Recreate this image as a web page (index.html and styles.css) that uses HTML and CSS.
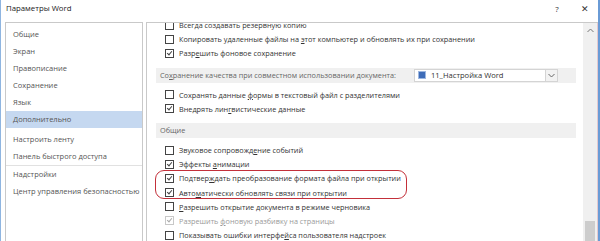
FILE: index.html
```html
<!DOCTYPE html>
<html lang="ru">
<head>
  <meta charset="UTF-8" />
  <title>Параметры Word</title>
  <link rel="stylesheet" href="styles.css">
</head>
<body>
  <div class="window">
    <div class="titlebar">
      <span class="title">Параметры Word</span>
      <span class="help">?</span>
      <span class="close">✕</span>
    </div>

    <div class="main">
      <ul class="nav">
        <li>Общие</li>
        <li>Экран</li>
        <li>Правописание</li>
        <li>Сохранение</li>
        <li>Язык</li>
        <li class="active">Дополнительно</li>
        <li class="gap">Настроить ленту</li>
        <li>Панель быстрого доступа</li>
        <li class="sep"></li>
        <li>Надстройки</li>
        <li>Центр управления безопасностью</li>
      </ul>

      <div class="content">
        <div class="scroller">
          <div class="list">
            <div class="row"><span class="box"></span><span>Всегда создавать резервную копию</span></div>
            <div class="row"><span class="box"></span><span>Копировать удаленные файлы на <u>э</u>тот компьютер и обновлять их при сохранении</span></div>
            <div class="row"><span class="box on"></span><span>Разр<u>е</u>шить фоновое сохранение</span></div>

            <div class="head">
              <span>Со<u>х</u>ранение качества при совместном использовании документа:</span>
              <span class="combo">
                <span class="doc-icon"></span>
                <span class="combo-text">11_Настройка Word</span>
                <span class="combo-btn">
                  <svg width="7" height="5" viewBox="0 0 7 5"><path d="M0.5 1 L3.5 4 L6.5 1" fill="none" stroke="#666" stroke-width="1"/></svg>
                </span>
              </span>
            </div>

            <div class="row"><span class="box"></span><span>Сохранять данные <u>ф</u>ормы в текстовый файл с разделителями</span></div>
            <div class="row"><span class="box on"></span><span>Внедрять лин<u>г</u>вистические данные</span></div>

            <div class="head"><span>Общие</span></div>

            <div class="row"><span class="box"></span><span>Звуковое сопровожд<u>е</u>ние событий</span></div>
            <div class="row"><span class="box on"></span><span>Эффекты <u>а</u>нимации</span></div>
            <div class="row"><span class="box on"></span><span>Подтвер<u>ж</u>дать преобразование формата файла при открытии</span></div>
            <div class="row"><span class="box on"></span><span>Авто<u>м</u>атически обновлять связи при открытии</span></div>
            <div class="row"><span class="box"></span><span><u>Р</u>азрешить открытие документа в режиме черновика</span></div>
            <div class="row disabled"><span class="box on"></span><span>Разрешить <u>ф</u>оновую разбивку на страницы</span></div>
            <div class="row"><span class="box"></span><span>Показывать ошибки интерфе<u>й</u>са пользователя надстроек</span></div>
          </div>
          <div class="mark"></div>
        </div>

        <div class="scrollbar">
          <svg class="arrow" width="7" height="5" viewBox="0 0 7 5"><path d="M0.5 4 L3.5 1 L6.5 4" fill="none" stroke="#777" stroke-width="1"/></svg>
          <div class="thumb"></div>
        </div>
      </div>
    </div>
  </div>
</body>
</html>
```

FILE: styles.css
```css
body {
  margin: 0;
  font-family: "Open Sans", "Noto Sans", sans-serif;
  font-size: 7.3px;
  color: #333;
  background: #fff;
}
.window {
  width: 600px;
  height: 241px;
  box-sizing: border-box;
  border-left: 1px solid #8fb5e0;
  border-right: 2px solid #6a9bd6;
  overflow: hidden;
  display: flex;
  flex-direction: column;
}
.titlebar {
  height: 22px;
  display: flex;
  align-items: center;
  padding: 0 0 6px 5px;
  box-sizing: border-box;
}
.title {
  flex: 1;
  font-size: 7.8px;
  color: #222;
}
.help {
  width: 30px;
  text-align: center;
  font-size: 8px;
  color: #333;
}
.close {
  width: 26px;
  text-align: center;
  font-size: 9px;
  color: #333;
}
.main {
  flex: 1;
  display: flex;
  padding-left: 4px;
  gap: 3px;
  min-height: 0;
}

/* левая панель */
.nav {
  list-style: none;
  margin: 0;
  padding: 3px 0 0;
  width: 136px;
  border: 1px solid #c9c9c9;
  border-bottom: none;
  color: #555;
  font-size: 7.5px;
}
.nav li {
  height: 17px;
  line-height: 17px;
  padding-left: 7px;
  white-space: nowrap;
}
.nav li.active {
  background: #c5d8f0;
}
.nav li.gap {
  margin-top: 3px;
}
.nav li.sep {
  height: 0;
  border-top: 1px solid #e1e1e1;
}

/* правая панель */
.content {
  flex: 1;
  display: flex;
  border: 1px solid #c9c9c9;
  border-bottom: none;
  border-right: none;
  min-width: 0;
}
.scroller {
  flex: 1;
  overflow: hidden;
  position: relative;
}
.list {
  margin-top: -5px;
  padding-left: 9px;
  padding-right: 7px;
}
.row {
  height: 14.2px;
  display: flex;
  align-items: center;
  padding-left: 9px;
  white-space: nowrap;
}
.row u, .head u {
  text-decoration-thickness: 1px;
  text-underline-offset: 1px;
}
.box {
  width: 7px;
  height: 7px;
  border: 1px solid #444;
  margin-right: 5px;
  flex: none;
  position: relative;
  background: #fff;
}
.box.on::after {
  content: "";
  position: absolute;
  left: 2px;
  top: 0;
  width: 2px;
  height: 4px;
  border: solid #444;
  border-width: 0 1px 1px 0;
  transform: rotate(40deg);
}
.row.disabled {
  color: #9a9a9a;
}
.row.disabled .box {
  border-color: #c8c8c8;
}
.row.disabled .box.on::after {
  border-color: #aaa;
}
.head {
  height: 15px;
  margin: 7px 0 5px;
  background: #f0f0f0;
  color: #666;
  display: flex;
  align-items: center;
  padding-left: 4px;
  white-space: nowrap;
}
.combo {
  margin-left: 18px;
  width: 144px;
  height: 13px;
  box-sizing: border-box;
  background: #fff;
  border: 1px solid #d4d4d4;
  display: flex;
  align-items: center;
  color: #333;
  font-size: 7.6px;
}
.doc-icon {
  width: 6px;
  height: 6px;
  margin: 0 5px 0 3px;
  background: #3e6cb8;
  border: 1px solid #9db7e0;
}
.combo-text {
  flex: 1;
}
.combo-btn {
  width: 11px;
  height: 11px;
  border-left: 1px solid #d4d4d4;
  background: #f2f2f2;
  display: flex;
  align-items: center;
  justify-content: center;
}

/* выделение красной рамкой */
.mark {
  position: absolute;
  left: 8px;
  top: 147px;
  width: 250px;
  height: 27px;
  border: 1.5px solid #c3303a;
  border-radius: 9px;
}

.scrollbar {
  width: 14px;
  background: #f0f0f0;
  display: flex;
  flex-direction: column;
  align-items: center;
  border-right: 1px solid #e3c9cf;
}
.arrow {
  margin-top: 5px;
}
.thumb {
  margin-top: auto;
  width: 10px;
  height: 20px;
  background: #cdcdcd;
}
```
